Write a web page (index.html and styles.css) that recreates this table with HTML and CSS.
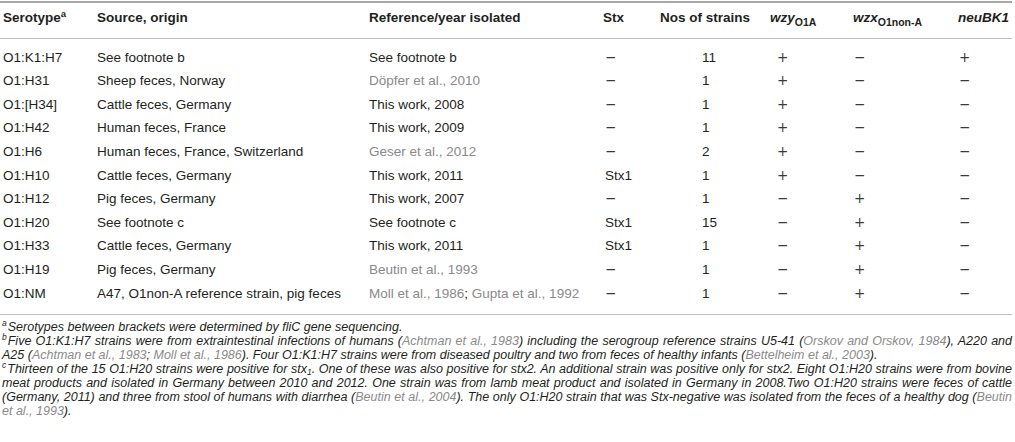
FILE: index.html
```html
<!DOCTYPE html>
<html lang="en">
<head>
<meta charset="utf-8">
<title>O1 serotypes</title>
<link rel="stylesheet" href="styles.css">
</head>
<body>
<div class="wrap">
  <table class="tbl">
    <colgroup>
      <col class="c1"><col class="c2"><col class="c3"><col class="c4"><col class="c5"><col class="c6"><col class="c7"><col class="c8">
    </colgroup>
    <thead>
      <tr>
        <th>Serotype<sup>a</sup></th>
        <th>Source, origin</th>
        <th>Reference/year isolated</th>
        <th>Stx</th>
        <th>Nos of strains</th>
        <th><i>wzy</i><sub>O1A</sub></th>
        <th><i>wzx</i><sub>O1non-A</sub></th>
        <th><i>neuBK1</i></th>
      </tr>
    </thead>
    <tbody>
      <tr><td>O1:K1:H7</td><td>See footnote b</td><td>See footnote b</td><td class="stx"><span class="sg">−</span></td><td class="num">11</td><td class="pz sg">+</td><td class="px sg">−</td><td class="pn sg">+</td></tr>
      <tr><td>O1:H31</td><td>Sheep feces, Norway</td><td><span class="ref">Döpfer et al., 2010</span></td><td class="stx"><span class="sg">−</span></td><td class="num">1</td><td class="pz sg">+</td><td class="px sg">−</td><td class="pn sg">−</td></tr>
      <tr><td>O1:[H34]</td><td>Cattle feces, Germany</td><td>This work, 2008</td><td class="stx"><span class="sg">−</span></td><td class="num">1</td><td class="pz sg">+</td><td class="px sg">−</td><td class="pn sg">−</td></tr>
      <tr><td>O1:H42</td><td>Human feces, France</td><td>This work, 2009</td><td class="stx"><span class="sg">−</span></td><td class="num">1</td><td class="pz sg">+</td><td class="px sg">−</td><td class="pn sg">−</td></tr>
      <tr><td>O1:H6</td><td>Human feces, France, Switzerland</td><td><span class="ref">Geser et al., 2012</span></td><td class="stx"><span class="sg">−</span></td><td class="num">2</td><td class="pz sg">+</td><td class="px sg">−</td><td class="pn sg">−</td></tr>
      <tr><td>O1:H10</td><td>Cattle feces, Germany</td><td>This work, 2011</td><td class="stx">Stx1</td><td class="num">1</td><td class="pz sg">+</td><td class="px sg">−</td><td class="pn sg">−</td></tr>
      <tr><td>O1:H12</td><td>Pig feces, Germany</td><td>This work, 2007</td><td class="stx"><span class="sg">−</span></td><td class="num">1</td><td class="pz sg">−</td><td class="px sg">+</td><td class="pn sg">−</td></tr>
      <tr><td>O1:H20</td><td>See footnote c</td><td>See footnote c</td><td class="stx">Stx1</td><td class="num">15</td><td class="pz sg">−</td><td class="px sg">+</td><td class="pn sg">−</td></tr>
      <tr><td>O1:H33</td><td>Cattle feces, Germany</td><td>This work, 2011</td><td class="stx">Stx1</td><td class="num">1</td><td class="pz sg">−</td><td class="px sg">+</td><td class="pn sg">−</td></tr>
      <tr><td>O1:H19</td><td>Pig feces, Germany</td><td><span class="ref">Beutin et al., 1993</span></td><td class="stx"><span class="sg">−</span></td><td class="num">1</td><td class="pz sg">−</td><td class="px sg">+</td><td class="pn sg">−</td></tr>
      <tr><td>O1:NM</td><td>A47, O1non-A reference strain, pig feces</td><td><span class="ref">Moll et al., 1986</span>; <span class="ref">Gupta et al., 1992</span></td><td class="stx"><span class="sg">−</span></td><td class="num">1</td><td class="pz sg">−</td><td class="px sg">+</td><td class="pn sg">−</td></tr>
    </tbody>
  </table>
  <div class="notes">
    <p><sup>a</sup>Serotypes between brackets were determined by fliC gene sequencing.</p>
    <p><sup>b</sup>Five O1:K1:H7 strains were from extraintestinal infections of humans (<span class="ref">Achtman et al., 1983</span>) including the serogroup reference strains U5-41 (<span class="ref">Orskov and Orskov, 1984</span>), A220 and A25 (<span class="ref">Achtman et al., 1983</span>; <span class="ref">Moll et al., 1986</span>). Four O1:K1:H7 strains were from diseased poultry and two from feces of healthy infants (<span class="ref">Bettelheim et al., 2003</span>).</p>
    <p><sup>c</sup>Thirteen of the 15 O1:H20 strains were positive for stx<sub>1</sub>. One of these was also positive for stx2. An additional strain was positive only for stx2. Eight O1:H20 strains were from bovine meat products and isolated in Germany between 2010 and 2012. One strain was from lamb meat product and isolated in Germany in 2008.Two O1:H20 strains were feces of cattle (Germany, 2011) and three from stool of humans with diarrhea (<span class="ref">Beutin et al., 2004</span>). The only O1:H20 strain that was Stx-negative was isolated from the feces of a healthy dog (<span class="ref">Beutin et al., 1993</span>).</p>
  </div>
</div>
</body>
</html>
```
FILE: styles.css
```css
html, body {
  margin: 0;
  padding: 0;
  background: #ffffff;
}
body {
  font-family: "Liberation Sans", Arial, Helvetica, sans-serif;
  color: #231f20;
}
.wrap {
  width: 1012px;
  padding-top: 1px;
}
.tbl {
  width: 1012px;
  border-collapse: collapse;
  table-layout: fixed;
  font-size: 13.5px;
  border-top: 2px solid #a7a7a7;
  border-bottom: 1px solid #bdbdbd;
}
.c1 { width: 97px; }
.c2 { width: 272px; }
.c3 { width: 234px; }
.c4 { width: 57px; }
.c5 { width: 110px; }
.c6 { width: 83px; }
.c7 { width: 105px; }
.c8 { width: 54px; }
.tbl th {
  text-align: left;
  font-weight: bold;
  line-height: 15.6px;
  padding: 7px 0 12px 0;
  border-bottom: 1px solid #bdbdbd;
  white-space: nowrap;
  vertical-align: top;
}
.tbl th:first-child, .tbl td:first-child {
  padding-left: 3px;
}
.tbl th sup {
  font-size: 9.5px;
  vertical-align: 5px;
  line-height: 0;
}
.tbl th sub {
  font-size: 10.5px;
  vertical-align: -4px;
  line-height: 0;
}
.tbl td {
  line-height: 15.6px;
  padding: 4px 0;
  white-space: nowrap;
  vertical-align: top;
}
.tbl tbody tr:first-child td { padding-top: 11px; }
.tbl tbody tr:last-child td { padding-bottom: 13px; }
.ref { color: #8a8a8a; }
.sg {
  font-family: "DejaVu Sans", sans-serif;
  font-weight: normal;
  color: #3a3a3a;
}
.tbl td.stx { padding-left: 2px; }
.tbl td.num { padding-left: 42px; }
.tbl td.pz { padding-left: 7px; }
.tbl td.px { padding-left: 1px; }
.tbl td.pn { padding-left: 1px; }
.notes {
  padding-top: 5px;
  font-size: 12.5px;
  line-height: 14px;
  font-style: italic;
  text-align: justify;
}
.notes p {
  margin: 0;
  padding-left: 2px;
}
.notes sup {
  font-size: 8.5px;
  vertical-align: 5px;
  line-height: 0;
  margin-right: 1px;
}
.notes sub {
  font-size: 8.5px;
  vertical-align: -2px;
  line-height: 0;
}
```
